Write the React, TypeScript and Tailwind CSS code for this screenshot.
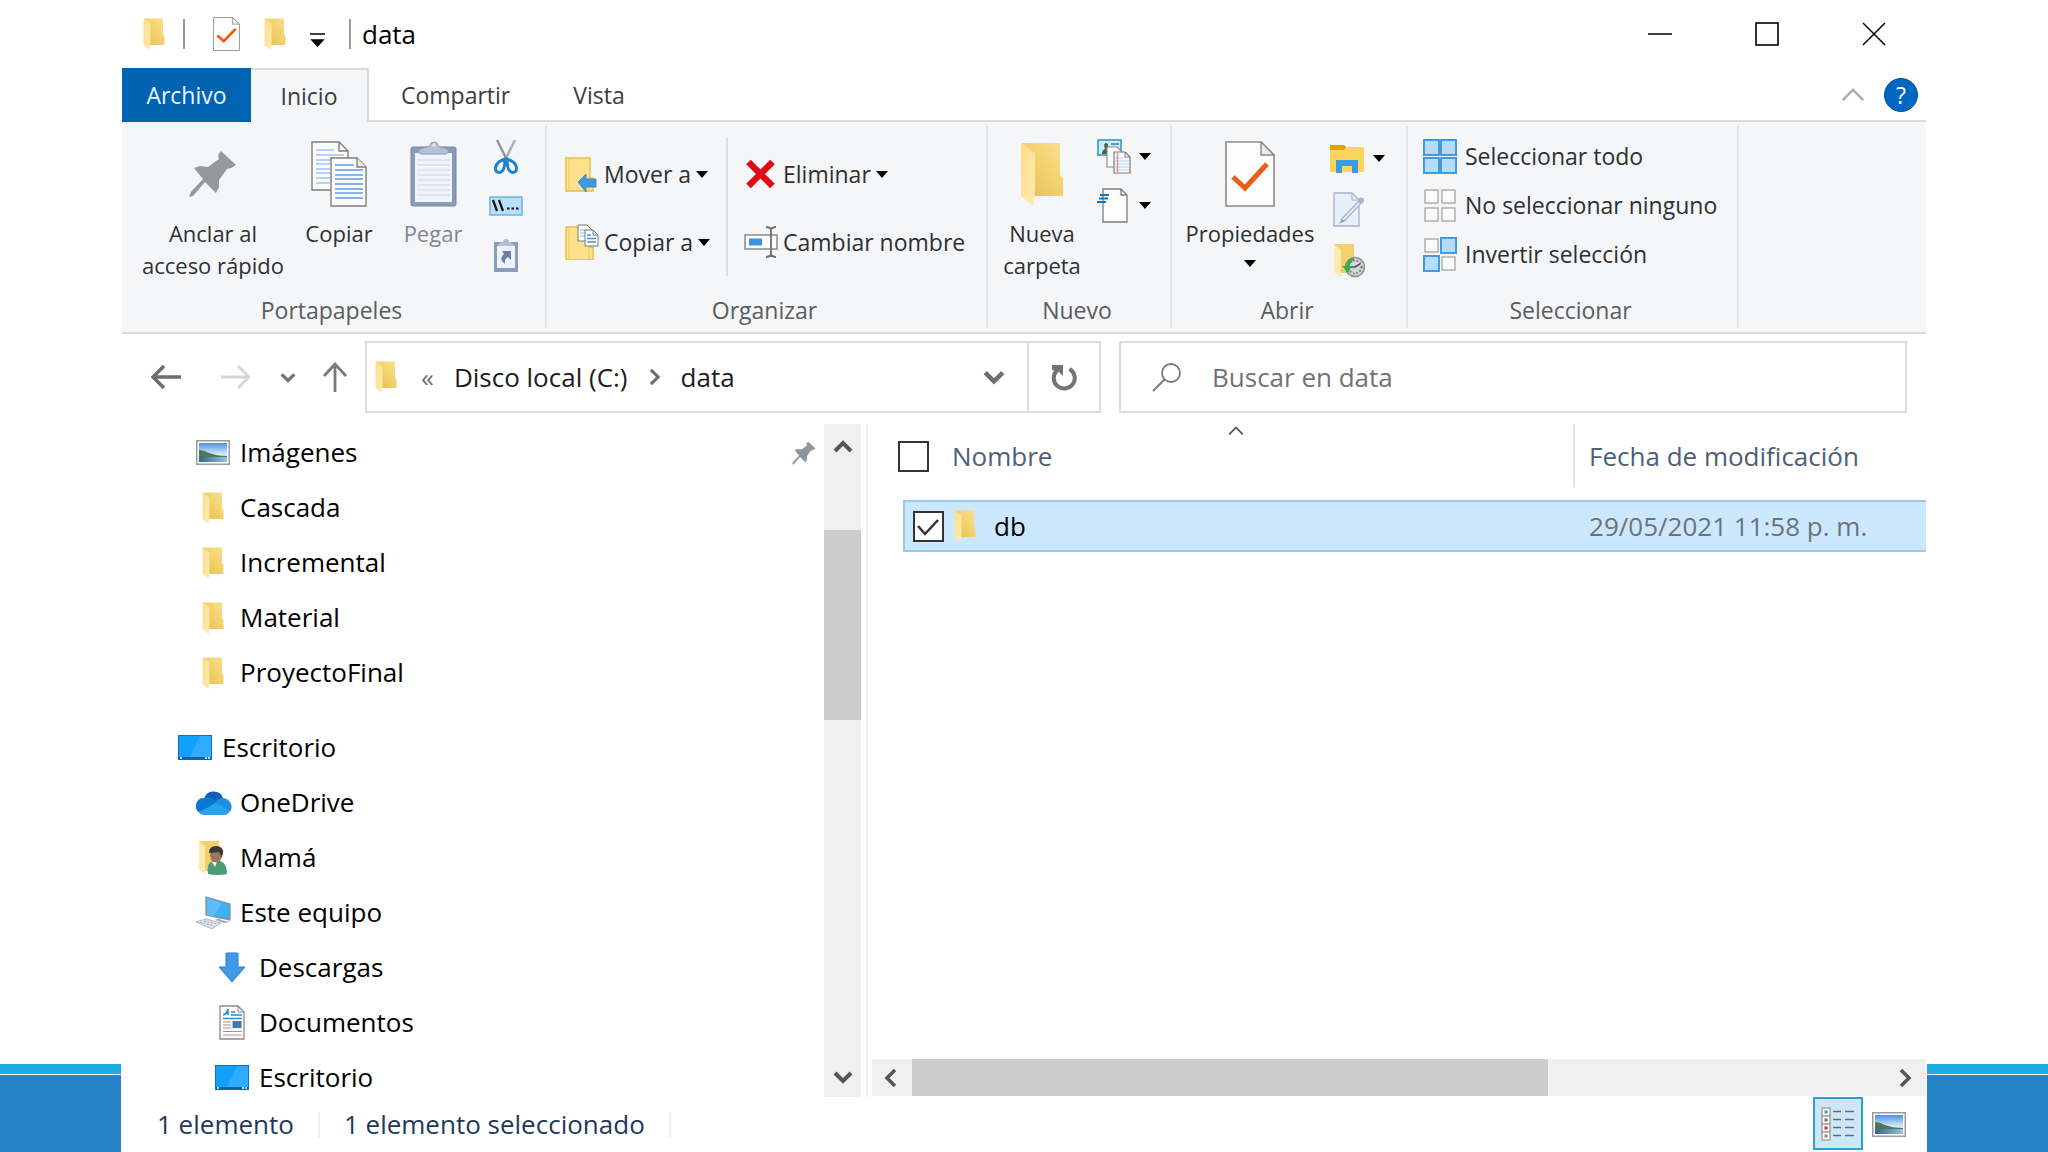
import type { ReactNode } from "react";

type IconProps = { className?: string };

function FolderIcon({ className = "h-8 w-[22px]" }: IconProps) {
  return (
    <svg viewBox="0 0 44 64" preserveAspectRatio="none" className={className}>
      <defs>
        <linearGradient id="folder-back" x1="0" y1="1" x2="1" y2="0">
          <stop offset="0" stopColor="#e3bc55" />
          <stop offset="0.5" stopColor="#f3d06c" />
          <stop offset="1" stopColor="#fbe08c" />
        </linearGradient>
        <linearGradient id="folder-flap" x1="0" y1="0" x2="1" y2="1">
          <stop offset="0" stopColor="#fbdf8c" />
          <stop offset="1" stopColor="#fdeaae" />
        </linearGradient>
      </defs>
      <path d="M2 1h38v32l3 3v18H13z" fill="url(#folder-back)" />
      <path d="M1 1l14 10v36l-1 16-2 0-11-9z" fill="url(#folder-flap)" />
    </svg>
  );
}

function CheckDocIcon({ className }: IconProps) {
  return (
    <svg viewBox="0 0 50 66" preserveAspectRatio="none" className={className}>
      <path d="M1 1h35l13 13v51H1z" fill="#fcfcfc" stroke="#8a8a8a" strokeWidth="1.6" />
      <path d="M36 1v13h13z" fill="#ececec" stroke="#8a8a8a" strokeWidth="1.4" />
      <path d="M8 36l12 11 22-24" fill="none" stroke="#ee5b14" strokeWidth="5" />
    </svg>
  );
}

function PinIcon({ className, color = "#929a9d" }: IconProps & { color?: string }) {
  return (
    <svg viewBox="0 0 48 48" className={className}>
      <path
        d="M32 1l15 14-5 3-4 1-8 11v7l-3 6L16 32 4 46l-4 1 2-5 12-13L5 18l6-2 8 1 11-8-1-4z"
        fill={color}
      />
    </svg>
  );
}

function CopyIcon() {
  return (
    <svg viewBox="0 0 56 66" className="h-[66px] w-14">
      <path d="M1 1h27l9 9v39H1z" fill="#fcfcfc" stroke="#7d7d7d" strokeWidth="1.4" />
      <path d="M28 1v9h9" fill="none" stroke="#7d7d7d" strokeWidth="1.4" />
      <path d="M5 9h18M5 14h28M5 19h15M5 23h14M5 28h14M5 32h14M5 37h14M5 42h14" stroke="#9fc3f2" strokeWidth="1.3" />
      <path d="M20 17h26l9 9v39H20z" fill="#fdfdfd" stroke="#7d7d7d" strokeWidth="1.4" />
      <path d="M46 17v9h9" fill="#eee" stroke="#7d7d7d" strokeWidth="1.4" />
      <path d="M24 24h19M24 29h28M24 34h28M24 38h28M24 43h28M24 48h28M24 52h28M24 57h28" stroke="#5c9be8" strokeWidth="1.5" />
    </svg>
  );
}

function PasteIcon() {
  return (
    <svg viewBox="0 0 47 66" className="h-[66px] w-[47px]">
      <rect x="1" y="6" width="45" height="59" rx="2" fill="#8a9abb" stroke="#7586ab" />
      <path d="M5 12h37v49H5z" fill="#f0f4fb" />
      <path d="M7 19h33M7 24h33M7 29h33M7 34h33M7 39h33M7 44h33M7 49h33M7 54h33" stroke="#ccd5e6" />
      <path d="M8 11q1-4 9-5l3-1a4 4 0 018 0l2 1q8 1 9 5l-3 2H11z" fill="#b7c1d4" stroke="#8a9abb" />
      <circle cx="24" cy="4" r="1.5" fill="#eef1f7" />
    </svg>
  );
}

function CutIcon() {
  return (
    <svg viewBox="0 0 26 36" className="h-9 w-[26px]" fill="none">
      <path d="M4 1l10 20" stroke="#8f9396" strokeWidth="2.4" />
      <path d="M22 1L12 21" stroke="#a9adb0" strokeWidth="2.4" />
      <path d="M12 20q0 13-5.500 13.500-4.500 0-4-5 1-6 9.500-8.500zM14 20q0 13 5.500 13.500 4.500 0 4-5-1-6-9.500-8.500z" stroke="#1f84cb" strokeWidth="3" />
    </svg>
  );
}

function PathIcon() {
  return (
    <svg viewBox="0 0 34 20" className="h-5 w-[34px]">
      <rect x="1" y="1" width="32" height="18" fill="#b9e0fb" stroke="#6cb2e6" strokeWidth="1.5" />
      <path d="M4 4l4 11M10 4l4 11" stroke="#111" strokeWidth="2.2" />
      <path d="M18 12.500h2.500M22.500 12.500h2.500M27 12.500h2.500" stroke="#111" strokeWidth="2.2" />
    </svg>
  );
}

function PasteShortcutIcon() {
  return (
    <svg viewBox="0 0 26 36" className="h-9 w-[26px]">
      <rect x="1" y="5" width="24" height="30" fill="#8c9cbe" />
      <path d="M4 9h18v22H4z" fill="#eef3fb" />
      <path d="M5 9q1-4 5-4a3 3 0 016 0q4 0 5 4z" fill="#b4bed2" />
      <path d="M9 14h9v9l-3-3q-4 2-3 7-7-5-1-10z" fill="#6b7fa6" />
    </svg>
  );
}

function FlatFolder() {
  return (
    <>
      <path d="M1 1h24v20h3v13H1z" fill="#fbe28b" stroke="#e6bf4c" strokeWidth="1.4" />
      <path d="M4 1v32M24 20v13" stroke="#e9c860" />
    </>
  );
}

function MoveToIcon() {
  return (
    <svg viewBox="0 0 34 35" className="h-[35px] w-[34px]">
      <FlatFolder />
      <path d="M13 25l8-8v5h10v8H21v5z" fill="#3f98e0" stroke="#2d80c4" strokeWidth="0.8" />
    </svg>
  );
}

function CopyToIcon() {
  return (
    <svg viewBox="0 0 34 36" className="h-9 w-[34px]">
      <g transform="translate(0 2)">
        <FlatFolder />
      </g>
      <path d="M13 1h9l5 5v11H13z" fill="#fff" stroke="#777" />
      <path d="M15 6h6M15 9h5M15 12h5" stroke="#7fb0ea" />
      <path d="M20 6h8l5 5v11H20z" fill="#fff" stroke="#777" />
      <path d="M28 6v5h5" fill="none" stroke="#777" />
      <path d="M22 11h4M22 14.500h9M22 18h9" stroke="#4a90e2" strokeWidth="1.3" />
    </svg>
  );
}

function DeleteIcon() {
  return (
    <svg viewBox="0 0 34 30" className="h-[30px] w-[34px]">
      <path d="M4.500 3l24 24M28.500 3l-24 24" stroke="#e10b17" strokeWidth="6.5" />
    </svg>
  );
}

function RenameIcon() {
  return (
    <svg viewBox="0 0 34 32" className="h-8 w-[34px]" fill="none">
      <rect x="1" y="9" width="32" height="14" fill="#fff" stroke="#8a8a8a" strokeWidth="1.5" />
      <path d="M5 12.500h13v7H5z" fill="#3a94e4" />
      <path d="M22 1q3 0 5 2 2-2 5-2M27 3v26M22 31q3 0 5-2 2 2 5 2" stroke="#6e6e6e" strokeWidth="1.8" />
    </svg>
  );
}

function NewItemIcon() {
  return (
    <svg viewBox="0 0 34 35" className="h-[35px] w-[34px]">
      <rect x="1" y="1" width="23" height="15" fill="#cdeafa" stroke="#3b97c4" strokeWidth="1.6" />
      <path d="M5 15q0-4 3-5-2-6 1-6t2 6q2 1 2 5z" fill="#41654a" />
      <path d="M14 5h8" stroke="#2f86bd" strokeWidth="1.5" />
      <path d="M10 8h10l5 5v15H10z" fill="#fff" stroke="#8a8a8a" strokeWidth="1.2" />
      <path d="M17 13h11l5 5v16H17z" fill="#fff" stroke="#777" strokeWidth="1.2" />
      <path d="M28 13v5h5" fill="none" stroke="#777" />
      <path d="M18 19h14M18 22h14M18 25h14M18 28h14M18 31h14" stroke="#a9cdf0" />
      <path d="M20.500 14v19" stroke="#f08b8b" strokeWidth="1.5" />
    </svg>
  );
}

function EasyAccessIcon() {
  return (
    <svg viewBox="0 0 34 35" className="h-[35px] w-[34px]">
      <path d="M6 1h18l6 6v27H6z" fill="#fcfcfc" stroke="#7d7d7d" strokeWidth="1.3" />
      <path d="M24 1v6h6" fill="none" stroke="#7d7d7d" strokeWidth="1.3" />
      <path d="M3 7h9M2 10.500h9M0 14h9" stroke="#1d73bd" strokeWidth="2" />
    </svg>
  );
}

function OpenIcon() {
  return (
    <svg viewBox="0 0 35 30" className="h-[30px] w-[35px]">
      <path d="M0 1h14l3 3-3 3H0z" fill="#e0a100" />
      <path d="M0 6h14l2-3h18v25H0z" fill="#fdd55c" />
      <path d="M6 29V16h22v13h-6v-7h-10v7z" fill="#3d9be0" />
    </svg>
  );
}

function EditIcon() {
  return (
    <svg viewBox="0 0 35 35" className="h-[35px] w-[35px]">
      <path d="M4 1h18l7 7v26H4z" fill="#e8effb" stroke="#a5b2cc" strokeWidth="1.3" />
      <path d="M22 1v7h7" fill="none" stroke="#a5b2cc" />
      <path d="M31 9L12 29" stroke="#9fadc6" strokeWidth="4.5" />
      <path d="M31 9L12 29" stroke="#dbe4f2" strokeWidth="2.5" />
      <path d="M12 27l-3 5 5-3z" fill="#8797b5" />
      <circle cx="31" cy="8.500" r="3" fill="#a9b6cb" />
    </svg>
  );
}

function HistoryIcon() {
  return (
    <svg viewBox="0 0 35 35" className="h-[35px] w-[35px]">
      <path d="M4 1h20v29H9z" fill="#f3d06c" />
      <path d="M4 1l7 6v20l-1 7-6-5z" fill="#fdeaae" />
      <circle cx="25" cy="24" r="9.500" fill="#d3d6d5" stroke="#8c908f" strokeWidth="1.5" />
      <circle cx="25" cy="24" r="6.500" fill="none" stroke="#777b7a" strokeDasharray="1.5 2" strokeWidth="2" />
      <path d="M20 24h5l5-3" fill="none" stroke="#4c504f" strokeWidth="1.5" />
      <path d="M24 15q-7 0-8 8h-4l6 7 4-7h-2q0-5 4-5z" fill="#35b04a" />
    </svg>
  );
}

// Four tiles in reading order; true paints the tile as selected.
function TilesIcon({ tiles }: { tiles: boolean[] }) {
  return (
    <svg viewBox="0 0 34 35" className="h-[35px] w-[34px]">
      {tiles.map((on, i) => {
        const x = (i % 2) * 17;
        const y = i < 2 ? 0 : 18;
        return on ? (
          <rect key={i} x={x + 1} y={y + 1} width="15" height="15" fill="#b5dcfd" stroke="#3f9be6" strokeWidth="2" />
        ) : (
          <rect key={i} x={x + 2} y={y + 2} width="13" height="13" fill="#fbfbfb" stroke="#a3a3a3" strokeWidth="1.3" />
        );
      })}
    </svg>
  );
}

function PictureIcon() {
  return (
    <svg viewBox="0 0 34 25" className="h-[25px] w-[34px]">
      <defs>
        <linearGradient id="picture-sky" x1="0" y1="0" x2="0" y2="1">
          <stop offset="0" stopColor="#4d8df0" />
          <stop offset="0.6" stopColor="#d7ebfb" />
        </linearGradient>
        <linearGradient id="picture-lake" x1="0" y1="0" x2="1" y2="0">
          <stop offset="0" stopColor="#35648c" />
          <stop offset="1" stopColor="#9cc2de" />
        </linearGradient>
      </defs>
      <rect x="0.750" y="0.750" width="32.500" height="23.500" fill="#fff" stroke="#9b9b9b" strokeWidth="1.5" />
      <path d="M3 3h28v19H3z" fill="url(#picture-sky)" />
      <path d="M3 16h28v6H3z" fill="url(#picture-lake)" />
      <path d="M3 10q5 0 10 3 8 3 18 3v1H3z" fill="#4a7a55" />
    </svg>
  );
}

function DesktopIcon() {
  return (
    <svg viewBox="0 0 34 25" className="h-[25px] w-[34px]">
      <rect x="0.500" y="0.500" width="33" height="24" fill="#12a0ff" stroke="#1170b0" />
      <path d="M22 1L12 22h21V1z" fill="#2fabff" />
      <path d="M1 22h32v2.500H1z" fill="#0c629f" />
      <path d="M2 23h2M27 23h2M30 23h2" stroke="#fff" strokeWidth="1.5" />
    </svg>
  );
}

function OneDriveIcon() {
  return (
    <svg viewBox="0 0 37 26" className="h-[26px] w-[37px]">
      <path d="M9 9a10 10 0 0119-1q-3 5-6 6z" fill="#0f5fb8" />
      <path d="M5 23A8 8 0 019 8q5-2 9 1l8 5-21 9z" fill="#0e78d0" />
      <path d="M28 8a9 9 0 017 14L20 13q3-5 8-5z" fill="#1f90e0" />
      <path d="M4 22l17-9 14 8q-2 4-6 4H9q-4 0-5-3z" fill="#2ba3ec" />
    </svg>
  );
}

function UserFolderIcon() {
  return (
    <svg viewBox="0 0 30 35" className="h-[35px] w-[30px]">
      <path d="M1 1h20v30H6z" fill="#f3d06c" />
      <path d="M1 1l6 5v28l-6-4z" fill="#fdeaae" />
      <path d="M10 34q-2-12 6-13l6 0q7 2 7 13-10 2-19 0z" fill="#4d9b79" />
      <path d="M14 22l3 5 2-5z" fill="#fff" />
      <ellipse cx="18" cy="15" rx="6" ry="7.500" fill="#a0765a" />
      <path d="M11 13q0-7 7-7 8 0 7 8l-2 4q0-6-3-6-5 1-9 1z" fill="#3c3a38" />
    </svg>
  );
}

function ComputerIcon() {
  return (
    <svg viewBox="0 0 37 34" className="h-[34px] w-[37px]">
      <path d="M11 1l24 7v16l-24-5z" fill="#3fb0f5" stroke="#82929e" strokeWidth="1.3" />
      <path d="M12 2l15 5-8 13-7-1z" fill="#5dbdf8" />
      <path d="M24 22l2 2 9 2-6 1-9-3z" fill="#a6acb0" />
      <path d="M1 26l10-3 15 4-9 6z" fill="#dfe2e4" stroke="#b4b9bd" />
      <path d="M5 26l14 4M9 25l13 3" stroke="#aab0b4" strokeDasharray="2 1.5" />
    </svg>
  );
}

function DownloadIcon() {
  return (
    <svg viewBox="0 0 28 31" className="h-[31px] w-7">
      <path d="M8 1h12v14h7L14 30 1 15h7z" fill="#4099e6" stroke="#2c7fc6" />
    </svg>
  );
}

function DocumentIcon() {
  return (
    <svg viewBox="0 0 26 35" className="h-[35px] w-[26px]">
      <path d="M1 1h18l6 6v27H1z" fill="#fdfdfd" stroke="#8a8a8a" strokeWidth="1.3" />
      <path d="M19 1v6h6" fill="none" stroke="#8a8a8a" />
      <path d="M4 10q4-1 5-6v6M12 7h4M12 10h11M4 13.500h19" fill="none" stroke="#2390da" strokeWidth="1.6" />
      <path d="M4 17h8M4 20h8M4 23h8M4 26.500h19M4 30h19" stroke="#979797" strokeWidth="1.2" />
      <path d="M13.500 16h9v7h-9z" fill="#3f78b4" />
    </svg>
  );
}

function DetailsIcon() {
  return (
    <svg viewBox="0 0 34 34" className="h-[34px] w-[34px]">
      {["#2f9c9c", "#a05c4c", "#c8321e", "#8a8a6a"].map((color, i) => (
        <g key={color} transform={`translate(0 ${i * 8})`}>
          <rect x="1" y="1" width="8" height="8" fill="#fff" stroke="#9a9a9a" strokeWidth="1.3" />
          <rect x="3.500" y="3.500" width="3" height="3" fill={color} />
          <path d="M12 4.500h8M24 4.500h9" stroke="#6b6b6b" strokeWidth="1.6" />
        </g>
      ))}
    </svg>
  );
}

function Caret() {
  return (
    <svg viewBox="0 0 12 7" className="h-[7px] w-3 shrink-0">
      <path d="M0 0h12L6 7z" fill="#000" />
    </svg>
  );
}

const chevrons = {
  up: "M2 11l8-8 8 8",
  down: "M2 3l8 8 8-8",
};

function Chevron({
  dir,
  className = "h-[14px] w-5",
  color = "#555",
  width = 3,
}: IconProps & { dir: keyof typeof chevrons; color?: string; width?: number }) {
  return (
    <svg viewBox="0 0 20 14" className={className}>
      <path d={chevrons[dir]} fill="none" stroke={color} strokeWidth={width} />
    </svg>
  );
}

function SideChevron({ flip = false, className = "h-5 w-[14px]", color = "#555" }: IconProps & { flip?: boolean; color?: string }) {
  return (
    <svg viewBox="0 0 14 20" className={className}>
      <path d={flip ? "M11 2l-8 8 8 8" : "M3 2l8 8-8 8"} fill="none" stroke={color} strokeWidth="3.5" />
    </svg>
  );
}

function Group({ label, className, children }: { label: string; className: string; children: ReactNode }) {
  return (
    <section className={`flex h-[202px] shrink-0 flex-col border-r-2 border-[#e3e5e7] ${className}`}>
      <div className="flex h-[168px]">{children}</div>
      <h2 className="pr-1 text-center text-[23px] leading-[32px] text-[#5a5d60]">{label}</h2>
    </section>
  );
}

function BigButton({
  icon,
  lines,
  className,
  caret = false,
}: {
  icon: ReactNode;
  lines: string[];
  className: string;
  caret?: boolean;
}) {
  return (
    <button className={`flex shrink-0 flex-col items-center text-[22px] leading-[32px] whitespace-nowrap ${className}`}>
      <span className="flex h-[91px] items-center pt-1">{icon}</span>
      {lines.map((line) => (
        <span key={line}>{line}</span>
      ))}
      {caret && (
        <span className="flex h-7 items-center">
          <Caret />
        </span>
      )}
    </button>
  );
}

function RowButton({ icon, label, caret = false }: { icon: ReactNode; label: string; caret?: boolean }) {
  return (
    <button className="flex h-[68px] items-center gap-[5px] text-[23px] whitespace-nowrap">
      <span className="w-[34px] shrink-0">{icon}</span>
      {label}
      {caret && <Caret />}
    </button>
  );
}

function SmallButton({ icon, label, caret = false }: { icon: ReactNode; label: string; caret?: boolean }) {
  return (
    <button aria-label={label} className="flex h-[49px] items-center gap-2">
      {icon}
      {caret && <Caret />}
    </button>
  );
}

const selectItems = [
  { label: "Seleccionar todo", tiles: [true, true, true, true] },
  { label: "No seleccionar ninguno", tiles: [false, false, false, false] },
  { label: "Invertir selección", tiles: [false, true, true, false] },
];

const quickAccess = [
  { label: "Imágenes", icon: <PictureIcon />, pinned: true },
  { label: "Cascada", icon: <FolderIcon /> },
  { label: "Incremental", icon: <FolderIcon /> },
  { label: "Material", icon: <FolderIcon /> },
  { label: "ProyectoFinal", icon: <FolderIcon /> },
];

const desktopTree = [
  { label: "Escritorio", icon: <DesktopIcon />, indent: "pl-[54px]" },
  { label: "OneDrive", icon: <OneDriveIcon />, indent: "pl-[72px]" },
  { label: "Mamá", icon: <UserFolderIcon />, indent: "pl-[72px]" },
  { label: "Este equipo", icon: <ComputerIcon />, indent: "pl-[72px]" },
  { label: "Descargas", icon: <DownloadIcon />, indent: "pl-[91px]" },
  { label: "Documentos", icon: <DocumentIcon />, indent: "pl-[91px]" },
  { label: "Escritorio", icon: <DesktopIcon />, indent: "pl-[91px]" },
];

function TreeItem({ icon, label, indent = "pl-[72px]", pinned = false }: { icon: ReactNode; label: string; indent?: string; pinned?: boolean }) {
  return (
    <li>
      <button className={`flex h-[55px] w-full items-center ${indent}`}>
        <span className="flex w-[38px] shrink-0 justify-center">{icon}</span>
        <span className="ml-2">{label}</span>
        {pinned && <PinIcon className="mr-2 ml-auto size-6" color="#8d969e" />}
      </button>
    </li>
  );
}

function SlideEdge() {
  return (
    <div className="flex w-[121px] shrink-0 flex-col justify-end">
      <div className="h-[10px] bg-[#1cade4]" />
      <div className="mt-px h-[77px] bg-[#2683c6]" />
    </div>
  );
}

export default function App() {
  return (
    <div className="flex h-screen overflow-hidden bg-white font-['Open_Sans',sans-serif] text-[26px] text-black">
      <SlideEdge />
      <main className="flex min-w-0 flex-1 flex-col px-px">
        {/* Title bar */}
        <header className="flex h-[68px] shrink-0 items-center pl-[21px]">
          <FolderIcon />
          <span className="ml-[18px] h-[30px] w-[2px] bg-[#9a9a9a]" />
          <button aria-label="Propiedades" className="ml-7">
            <CheckDocIcon className="h-[34px] w-[27px]" />
          </button>
          <button aria-label="Nueva carpeta" className="ml-6">
            <FolderIcon />
          </button>
          <button aria-label="Personalizar barra" className="mt-3 ml-6">
            <svg viewBox="0 0 15 14" className="h-[14px] w-[15px]">
              <path d="M0 1h15M2 7h11l-5.500 6z" fill="#000" stroke="#000" strokeWidth="1.5" />
            </svg>
          </button>
          <span className="ml-6 h-[30px] w-[2px] bg-[#9a9a9a]" />
          <h1 className="ml-[11px]">data</h1>
          <div className="mr-10 ml-auto flex items-center gap-[83px]">
            <button aria-label="Minimizar">
              <svg viewBox="0 0 24 24" className="size-6">
                <path d="M0 12h24" stroke="#000" strokeWidth="1.5" />
              </svg>
            </button>
            <button aria-label="Maximizar">
              <svg viewBox="0 0 24 24" className="size-6">
                <rect x="1" y="1" width="22" height="22" fill="none" stroke="#000" strokeWidth="1.6" />
              </svg>
            </button>
            <button aria-label="Cerrar">
              <svg viewBox="0 0 24 24" className="size-6">
                <path d="M1 1l22 22M23 1L1 23" stroke="#000" strokeWidth="1.5" />
              </svg>
            </button>
          </div>
        </header>

        {/* Tabs */}
        <nav className="flex h-[54px] shrink-0 text-[23px] text-[#3c3c3c]">
          <button className="w-[129px] bg-[#0063b1] text-[#eaf3fb]">Archivo</button>
          <button className="w-[118px] border-t-2 border-r-2 border-[#dadbdc] bg-[#f5f6f7]">Inicio</button>
          <div className="flex flex-1 items-center border-b-2 border-[#dadbdc] pt-[2px]">
            <button className="ml-8">Compartir</button>
            <button className="ml-[63px]">Vista</button>
            <button aria-label="Contraer cinta" className="ml-auto">
              <Chevron dir="up" className="h-[18px] w-[26px]" color="#b0b0b0" width={2} />
            </button>
            <button
              aria-label="Ayuda"
              className="mr-2 ml-[18px] flex size-[34px] items-center justify-center rounded-full border border-[#0a4f93] bg-[#0067c5] leading-none text-white"
            >
              ?
            </button>
          </div>
        </nav>

        {/* Ribbon */}
        <div className="flex h-[212px] shrink-0 border-b-2 border-[#dadbdc] bg-[#f5f6f7] pt-1 text-[#2e3033]">
          <Group label="Portapapeles" className="w-[425px]">
            <div className="flex gap-[10px] pl-[17px]">
              <BigButton icon={<PinIcon className="size-12" />} lines={["Anclar al", "acceso rápido"]} className="w-[148px]" />
              <BigButton icon={<CopyIcon />} lines={["Copiar"]} className="w-[84px]" />
              <BigButton icon={<PasteIcon />} lines={["Pegar"]} className="w-[84px] text-[#858789]" />
              <div className="flex w-[42px] flex-col items-center pt-[6px]">
                <SmallButton icon={<CutIcon />} label="Cortar" />
                <SmallButton icon={<PathIcon />} label="Copiar ruta de acceso" />
                <SmallButton icon={<PasteShortcutIcon />} label="Pegar acceso directo" />
              </div>
            </div>
          </Group>
          <Group label="Organizar" className="w-[441px]">
            <div className="w-[179px] pt-[14px] pl-[18px]">
              <RowButton icon={<MoveToIcon />} label="Mover a" caret />
              <RowButton icon={<CopyToIcon />} label="Copiar a" caret />
            </div>
            <div className="mt-3 h-[138px] w-[2px] bg-[#dcdee0]" />
            <div className="pt-[14px] pl-4">
              <RowButton icon={<DeleteIcon />} label="Eliminar" caret />
              <RowButton icon={<RenameIcon />} label="Cambiar nombre" />
            </div>
          </Group>
          <Group label="Nuevo" className="w-[184px]">
            <BigButton icon={<FolderIcon className="h-16 w-11" />} lines={["Nueva", "carpeta"]} className="ml-[10px] w-[88px]" />
            <div className="ml-[11px] flex flex-col pt-[6px]">
              <SmallButton icon={<NewItemIcon />} label="Nuevo elemento" caret />
              <SmallButton icon={<EasyAccessIcon />} label="Fácil acceso" caret />
            </div>
          </Group>
          <Group label="Abrir" className="w-[236px]">
            <BigButton icon={<CheckDocIcon className="h-[66px] w-[50px]" />} lines={["Propiedades"]} className="ml-2 w-[140px]" caret />
            <div className="ml-[10px] flex flex-col gap-[2px] pt-2">
              <SmallButton icon={<OpenIcon />} label="Abrir" caret />
              <SmallButton icon={<EditIcon />} label="Editar" />
              <SmallButton icon={<HistoryIcon />} label="Historial" />
            </div>
          </Group>
          <Group label="Seleccionar" className="w-[331px]">
            <div className="flex flex-col pt-[6px] pl-[15px]">
              {selectItems.map(({ label, tiles }) => (
                <button key={label} className="flex h-[49px] items-center gap-2 text-[23px] whitespace-nowrap">
                  <TilesIcon tiles={tiles} />
                  {label}
                </button>
              ))}
            </div>
          </Group>
        </div>

        {/* Address bar and search */}
        <div className="flex h-[90px] shrink-0 items-start pt-[7px] pr-[19px]">
          <div className="flex h-[72px] w-[243px] shrink-0 items-center pl-[29px]">
            <button aria-label="Atrás">
              <svg viewBox="0 0 30 26" className="h-[26px] w-[30px]">
                <path d="M30 13H3M13 2L2 13l11 11" fill="none" stroke="#6e6e6e" strokeWidth="3.5" />
              </svg>
            </button>
            <button aria-label="Adelante" className="ml-10">
              <svg viewBox="0 0 30 26" className="h-[26px] w-[30px]">
                <path d="M0 13h27M17 2l11 11-11 11" fill="none" stroke="#d6d6d6" strokeWidth="3" />
              </svg>
            </button>
            <button aria-label="Ubicaciones recientes" className="ml-[29px]">
              <Chevron dir="down" className="h-[11px] w-4" color="#6e6e6e" width={4} />
            </button>
            <button aria-label="Subir" className="ml-[26px]">
              <svg viewBox="0 0 26 30" className="h-[30px] w-[26px]">
                <path d="M13 30V3M2 14L13 2l11 12" fill="none" stroke="#7a7a7a" strokeWidth="2.8" />
              </svg>
            </button>
          </div>
          <div className="flex h-[72px] flex-1 items-center border-2 border-[#dcdcdc] text-[#1c1c1c]">
            <span className="ml-2 flex">
              <FolderIcon />
            </span>
            <span className="ml-6 text-[#6e6e6e]">«</span>
            <button className="ml-5">Disco local (C:)</button>
            <SideChevron className="ml-5 h-[18px] w-[13px]" color="#6e6e6e" />
            <button className="ml-5">data</button>
            <button aria-label="Ubicaciones anteriores" className="mr-[22px] ml-auto">
              <Chevron dir="down" className="h-4 w-[22px]" color="#6e6e6e" width={4} />
            </button>
            <button aria-label="Actualizar" className="flex h-full w-[72px] items-center justify-center border-l-2 border-[#dcdcdc]">
              <svg viewBox="0 0 26 27" className="h-[27px] w-[26px]">
                <path d="M18.500 5A10.500 10.500 0 116 6.500" fill="none" stroke="#737373" strokeWidth="4" />
                <path d="M1 1h11v11l-4-4-7-2z" fill="#737373" />
              </svg>
            </button>
          </div>
          <label className="ml-[18px] flex h-[72px] w-[788px] items-center border-2 border-[#dcdcdc] pl-[31px]">
            <svg viewBox="0 0 30 30" className="size-[30px] shrink-0">
              <circle cx="19" cy="11" r="9" fill="none" stroke="#7a7a7a" strokeWidth="1.8" />
              <path d="M12.500 17.500L1 29" stroke="#7a7a7a" strokeWidth="2" />
            </svg>
            <input
              type="search"
              aria-label="Buscar en data"
              placeholder="Buscar en data"
              className="ml-[30px] min-w-0 flex-1 outline-none placeholder:text-[#707274]"
            />
          </label>
        </div>

        <div className="flex min-h-0 flex-1">
          {/* Navigation tree */}
          <aside className="w-[702px] shrink-0 overflow-hidden pt-px">
            <ul>
              {quickAccess.map((item) => (
                <TreeItem key={item.label} {...item} />
              ))}
            </ul>
            <ul className="mt-5">
              {desktopTree.map((item) => (
                <TreeItem key={item.label + item.indent} {...item} />
              ))}
            </ul>
          </aside>
          <div className="flex w-[37px] shrink-0 flex-col items-center bg-[#f0f0f0] pt-[14px] pb-[11px]">
            <Chevron dir="up" className="h-[18px] w-5" width={4} />
            <div className="mt-[74px] h-[190px] w-full bg-[#cdcdcd]" />
            <Chevron dir="down" className="mt-auto h-[18px] w-5" width={4} />
          </div>
          <div className="mr-1 ml-[5px] w-[2px] bg-[#f0f0f0]" />

          {/* File list */}
          <section className="flex min-w-0 flex-1 flex-col">
            <table className="w-full table-fixed text-left">
              <colgroup>
                <col className="w-8" />
                <col className="w-[671px]" />
                <col />
              </colgroup>
              <thead>
                <tr className="h-[77px] align-top text-[#4c607a]">
                  <th colSpan={2} className="p-0 font-normal">
                    <div className="relative ml-[26px] flex h-[63px] items-center border-r-2 border-[#e5e5e5] pt-[2px]">
                      <input
                        type="checkbox"
                        aria-label="Seleccionar todos"
                        className="size-[31px] appearance-none border-2 border-[#333] bg-white"
                      />
                      <span className="ml-[23px]">Nombre</span>
                      <Chevron dir="up" className="absolute top-px left-1/2 h-3 w-[18px] -translate-x-1/2" width={2} />
                    </div>
                  </th>
                  <th className="p-0 font-normal">
                    <div className="flex h-[63px] items-center pt-[2px] pl-[14px] whitespace-nowrap">Fecha de modificación</div>
                  </th>
                </tr>
              </thead>
              <tbody>
                <tr className="h-[50px]">
                  <td className="p-0" />
                  <td className="border-y-2 border-l-2 border-[#99c9ef] bg-[#cce8ff] p-0">
                    <label className="flex items-center pl-2">
                      <span className="relative flex">
                        <input type="checkbox" defaultChecked className="size-[31px] appearance-none border-2 border-[#333] bg-white" />
                        <svg viewBox="0 0 31 31" className="pointer-events-none absolute inset-0">
                          <path d="M5 15l7 8L25 9" fill="none" stroke="#333" strokeWidth="2.5" />
                        </svg>
                      </span>
                      <span className="ml-[10px]">
                        <FolderIcon />
                      </span>
                      <span className="ml-[18px]">db</span>
                    </label>
                  </td>
                  <td className="border-y-2 border-[#99c9ef] bg-[#cce8ff] p-0 pl-[14px] whitespace-nowrap text-[#6d7378]">
                    29/05/2021 11:58 p. m.
                  </td>
                </tr>
              </tbody>
            </table>
            <div className="mt-auto mb-px flex h-[37px] shrink-0 items-center bg-[#f0f0f0] pr-[14px] pl-3">
              <SideChevron flip />
              <div className="ml-[14px] h-full w-[636px] bg-[#cdcdcd]" />
              <SideChevron className="ml-auto h-5 w-[14px]" />
            </div>
          </section>
        </div>

        {/* Status bar */}
        <footer className="flex h-[55px] shrink-0 items-center pl-[35px] text-[#1e395b]">
          <span>1 elemento</span>
          <span className="mx-6 h-[26px] w-[2px] bg-[#f0f0f0]" />
          <span>1 elemento seleccionado</span>
          <span className="ml-6 h-[26px] w-[2px] bg-[#f0f0f0]" />
          <button
            aria-label="Detalles"
            className="mb-[2px] ml-auto flex h-[53px] w-[50px] items-center justify-center border-2 border-[#2c9fd6] bg-[#cce8f6]"
          >
            <DetailsIcon />
          </button>
          <button aria-label="Iconos grandes" className="mr-5 ml-[9px]">
            <PictureIcon />
          </button>
        </footer>
      </main>
      <SlideEdge />
    </div>
  );
}
